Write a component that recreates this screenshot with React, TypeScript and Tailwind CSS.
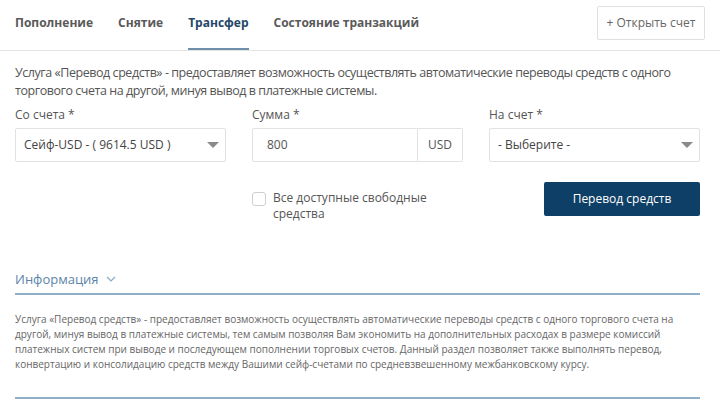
import React from 'react';

const font = { fontFamily: '"Open Sans", "Noto Sans", sans-serif' };

const Caret: React.FC = () => (
  <svg width="12" height="7" viewBox="0 0 12 7" className="shrink-0">
    <path d="M0 0 L12 0 L6 6 Z" fill="#8a8a8a" />
  </svg>
);

export default function App() {
  const tabs = ['Пополнение', 'Снятие', 'Трансфер', 'Состояние транзакций'];
  return (
    <div className="w-[720px] h-[400px] bg-white overflow-hidden text-[#555]" style={font}>
      {/* Tabs */}
      <div className="h-[51px] border-b border-[#e3e3e3] flex items-start justify-between pl-[15px] pr-[15px]">
        <div className="flex gap-[25px] h-full">
          {tabs.map((t) => (
            <div
              key={t}
              className={
                'h-full flex items-center pb-[3px] text-[12px] font-bold border-b-2 ' +
                (t === 'Трансфер'
                  ? 'text-[#24476a] border-[#6f8ea9]'
                  : 'text-[#5a5a5a] border-transparent')
              }
            >
              {t}
            </div>
          ))}
        </div>
        <button className="mt-[6px] h-[34px] w-[108px] border border-[#e0e0e0] rounded-[2px] text-[12px] text-[#666] bg-white">
          + Открыть счет
        </button>
      </div>

      <div className="pl-[15px] pr-[20px]">
        {/* Description */}
        <p className="mt-[13px] text-[12.5px] leading-[18px] text-[#555] tracking-[-0.45px]">
          Услуга «Перевод средств» - предоставляет возможность осуществлять автоматические переводы средств с одного
          торгового счета на другой, минуя вывод в платежные системы.
        </p>

        {/* Form */}
        <div className="mt-[7px] grid grid-cols-3 gap-x-[26px]">
          <div>
            <div className="text-[12px] leading-[16px] text-[#555]">Со счета *</div>
            <div className="mt-[5px] h-[34px] border border-[#e2e2e2] rounded-[2px] flex items-center justify-between pl-[8px] pr-[6px] text-[12px] text-[#444]">
              <span>Сейф-USD - ( 9614.5 USD )</span>
              <Caret />
            </div>
          </div>
          <div>
            <div className="text-[12px] leading-[16px] text-[#555]">Сумма *</div>
            <div className="mt-[5px] h-[34px] flex">
              <div className="flex-1 border border-[#e2e2e2] rounded-l-[2px] flex items-center pl-[14px] text-[12px] text-[#555]">
                800
              </div>
              <div className="w-[45px] border border-l-0 border-[#e2e2e2] rounded-r-[2px] flex items-center justify-center text-[12px] text-[#555]">
                USD
              </div>
            </div>
          </div>
          <div>
            <div className="text-[12px] leading-[16px] text-[#555]">На счет *</div>
            <div className="mt-[5px] h-[34px] border border-[#e2e2e2] rounded-[2px] flex items-center justify-between pl-[8px] pr-[6px] text-[12px] text-[#444]">
              <span>- Выберите -</span>
              <Caret />
            </div>
          </div>

          <div />
          <div className="mt-[29px] flex items-start gap-[7px]">
            <div className="w-[14px] h-[14px] mt-[1px] border border-[#cfcfcf] rounded-[3px] shrink-0" />
            <div className="text-[12px] leading-[16px] text-[#555] -mt-[1px]">
              Все доступные свободные
              <br />
              средства
            </div>
          </div>
          <div className="mt-[20px] flex justify-end">
            <button className="h-[34px] w-[156px] bg-[#0e3f66] rounded-[2px] text-white text-[12px]">
              Перевод средств
            </button>
          </div>
        </div>

        {/* Info */}
        <div className="mt-[48px] border-b-2 border-[#8fb0c8] pb-[5px] flex items-center gap-[7px] text-[13px] leading-[18px] text-[#5b85aa]">
          <span>Информация</span>
          <svg width="10" height="6" viewBox="0 0 10 6">
            <path d="M1 1 L5 5 L9 1" fill="none" stroke="#8aa9c3" strokeWidth="1.2" />
          </svg>
        </div>
        <p className="mt-[17px] text-[10px] leading-[15px] text-[#666]">
          Услуга «Перевод средств» - предоставляет возможность осуществлять автоматические переводы средств с одного торгового счета на
          <br />
          другой, минуя вывод в платежные системы, тем самым позволяя Вам экономить на дополнительных расходах в размере комиссий
          <br />
          платежных систем при выводе и последующем пополнении торговых счетов. Данный раздел позволяет также выполнять перевод,
          <br />
          конвертацию и консолидацию средств между Вашими сейф-счетами по средневзвешенному межбанковскому курсу.
        </p>
        <div className="mt-[25px] border-b-2 border-[#8fb0c8]" />
      </div>
    </div>
  );
}
